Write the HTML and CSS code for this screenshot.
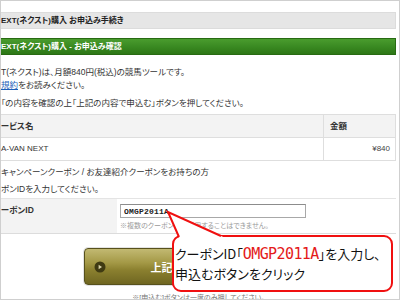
FILE: index.html
```html
<!DOCTYPE html>
<html lang="ja">
<head>
    <meta charset="UTF-8">
    <meta name="viewport" content="width=device-width, initial-scale=1.0">
    <title>お申込み確認</title>
    <link rel="stylesheet" href="styles.css">
</head>
<body>
    <div class="frame">
        <div class="page">
            <h2 class="bar bar-gray">EXT(ネクスト)購入 お申込み手続き</h2>
            <h3 class="bar bar-green">EXT(ネクスト)購入 - お申込み確認</h3>

            <p class="lead">T(ネクスト)は、月額840円(税込)の競馬ツールです。<br><a href="#">規約</a>をお読みください。</p>
            <p class="confirm">「の内容を確認の上「上記の内容で申込む」ボタンを押してください。</p>

            <table class="items">
                <colgroup>
                    <col>
                    <col class="col-price">
                </colgroup>
                <tr>
                    <th>ービス名</th>
                    <th class="price-head">金額</th>
                </tr>
                <tr>
                    <td>A-VAN NEXT</td>
                    <td class="price">&yen;840</td>
                </tr>
            </table>

            <p class="coupon-lead">キャンペーンクーポン / お友達紹介クーポンをお持ちの方<br>ポンIDを入力してください。</p>

            <table class="coupon">
                <tr>
                    <th>ーポンID</th>
                    <td>
                        <input type="text" class="coupon-input" value="OMGP2011A">
                        <div class="coupon-note">※複数のクーポンIDを併用することはできません。</div>
                    </td>
                </tr>
            </table>

            <div class="submit">
                <button class="submit-btn">
                    <svg class="btn-icon" width="12" height="12" viewBox="0 0 12 12">
                        <circle cx="6" cy="6" r="5.5" fill="#3f3a12"/>
                        <path d="M4.6 3.8 L8 6 L4.6 8.2 Z" fill="#d8d2a8"/>
                    </svg>
                    <span>上記の内容で申込む</span>
                </button>
            </div>
            <p class="caution">※[申込む]ボタンは一度のみ押してください。</p>
        </div>

        <div class="callout">
            クーポンID「<span class="code">OMGP2011A</span>」を入力し、<br>申込むボタンをクリック
        </div>
        <svg class="callout-tail" width="70" height="36" viewBox="0 0 70 36">
            <polygon points="7,6 18.9,33 66.6,33" fill="#fff"/>
            <polyline points="18,31 7,6 60,30" fill="none" stroke="#f01010" stroke-width="2"/>
        </svg>
    </div>
</body>
</html>
```

FILE: styles.css
```css
body {
    margin: 0;
    font-family: "Liberation Sans", "Noto Sans CJK JP", sans-serif;
    font-size: 8.5px;
    color: #333;
    font-feature-settings: "palt";
}

.frame {
    position: relative;
    width: 400px;
    height: 300px;
    box-sizing: border-box;
    border: 1px solid #cfcfcf;
    overflow: hidden;
    background: #fff;
}

.page {
    padding: 11px 3px 0 0;
}

.bar {
    margin: 0;
    height: 15px;
    line-height: 15px;
    font-size: 8px;
    font-weight: bold;
}

.bar-gray {
    background: #e6e6e6;
    border: 1px solid #dcdcdc;
    border-left: none;
    color: #222;
}

.bar-green {
    margin-top: 9px;
    background: linear-gradient(#4a9c2e, #3a8a22 50%, #2d7716);
    border: 1px solid #286a12;
    border-left: none;
    color: #fff;
}

.lead {
    margin: 11px 0 0;
    line-height: 13px;
}

.lead a {
    color: #1d5fb8;
}

.confirm {
    margin: 5px 0 0;
    line-height: 13px;
}

.items {
    margin-top: 4px;
    width: 100%;
    table-layout: fixed;
    border-collapse: collapse;
}

.items .col-price {
    width: 72px;
}

.items th,
.items td {
    padding: 5px 0;
    line-height: 12px;
    border: 1px solid #dedede;
    border-left: none;
    text-align: left;
}

.items td {
    font-size: 8px;
}

.items th {
    background: #f3f3f3;
    font-size: 8.5px;
    font-weight: bold;
    color: #333;
}

.items .price-head,
.items .price {
    border-left: 1px solid #dedede;
    padding-left: 6px;
}

.items .price {
    text-align: right;
    padding-right: 5px;
    color: #444;
}

.coupon-lead {
    margin: 3px 0 0;
    line-height: 17px;
}

.coupon {
    width: 100%;
    border-collapse: collapse;
}

.coupon th,
.coupon td {
    border-top: 1px solid #e4e4e4;
    border-bottom: 1px solid #dcdcdc;
    vertical-align: top;
    text-align: left;
}

.coupon th {
    width: 116px;
    padding: 5px 0 0;
    line-height: 12px;
    background: #f3f3f3;
    font-size: 8.5px;
    font-weight: bold;
}

.coupon td {
    padding: 5px 3px 1px;
}

.coupon-input {
    display: block;
    box-sizing: border-box;
    width: 186px;
    height: 14px;
    margin: 0;
    padding: 0 3px;
    border: 1px solid #a8a8a8;
    border-top-color: #8c8c8c;
    font-family: "Liberation Mono", monospace;
    font-size: 8px;
    font-weight: bold;
    letter-spacing: 0.2px;
    color: #222;
}

.coupon-note {
    margin-top: 2px;
    line-height: 12px;
    font-size: 7px;
    color: #9a9a9a;
}

.submit {
    display: flex;
    justify-content: center;
    padding-left: 4px;
    margin-top: 14px;
}

.submit-btn {
    display: flex;
    align-items: center;
    width: 234px;
    height: 37px;
    padding: 0 0 0 9px;
    border: 1px solid #57511c;
    border-radius: 4px;
    box-shadow: 0 0 0 1px #e2e2e2;
    background: linear-gradient(#c2b972, #a39845 40%, #8b802f 60%, #6f6621);
    color: #fff;
    font-family: "Noto Sans CJK JP", sans-serif;
    font-size: 11px;
    font-weight: bold;
}

.submit-btn span {
    margin-left: 45px;
}

.caution {
    margin: 8px 0 0;
    line-height: 10px;
    font-size: 7px;
    color: #777;
    text-align: center;
}

.callout {
    position: absolute;
    left: 171px;
    top: 234px;
    width: 221px;
    height: 57px;
    box-sizing: border-box;
    padding: 7px 0 0 1px;
    border: 2px solid #f01010;
    border-radius: 9px;
    background: #fff;
    font-family: "Noto Sans CJK JP", sans-serif;
    font-size: 13px;
    line-height: 19px;
    color: #111;
    white-space: nowrap;
}

.callout .code {
    font-family: "DejaVu Sans Mono", monospace;
    font-size: 15px;
    letter-spacing: -0.6px;
    color: #e41a1a;
}

.callout-tail {
    position: absolute;
    left: 160px;
    top: 205px;
}
```
